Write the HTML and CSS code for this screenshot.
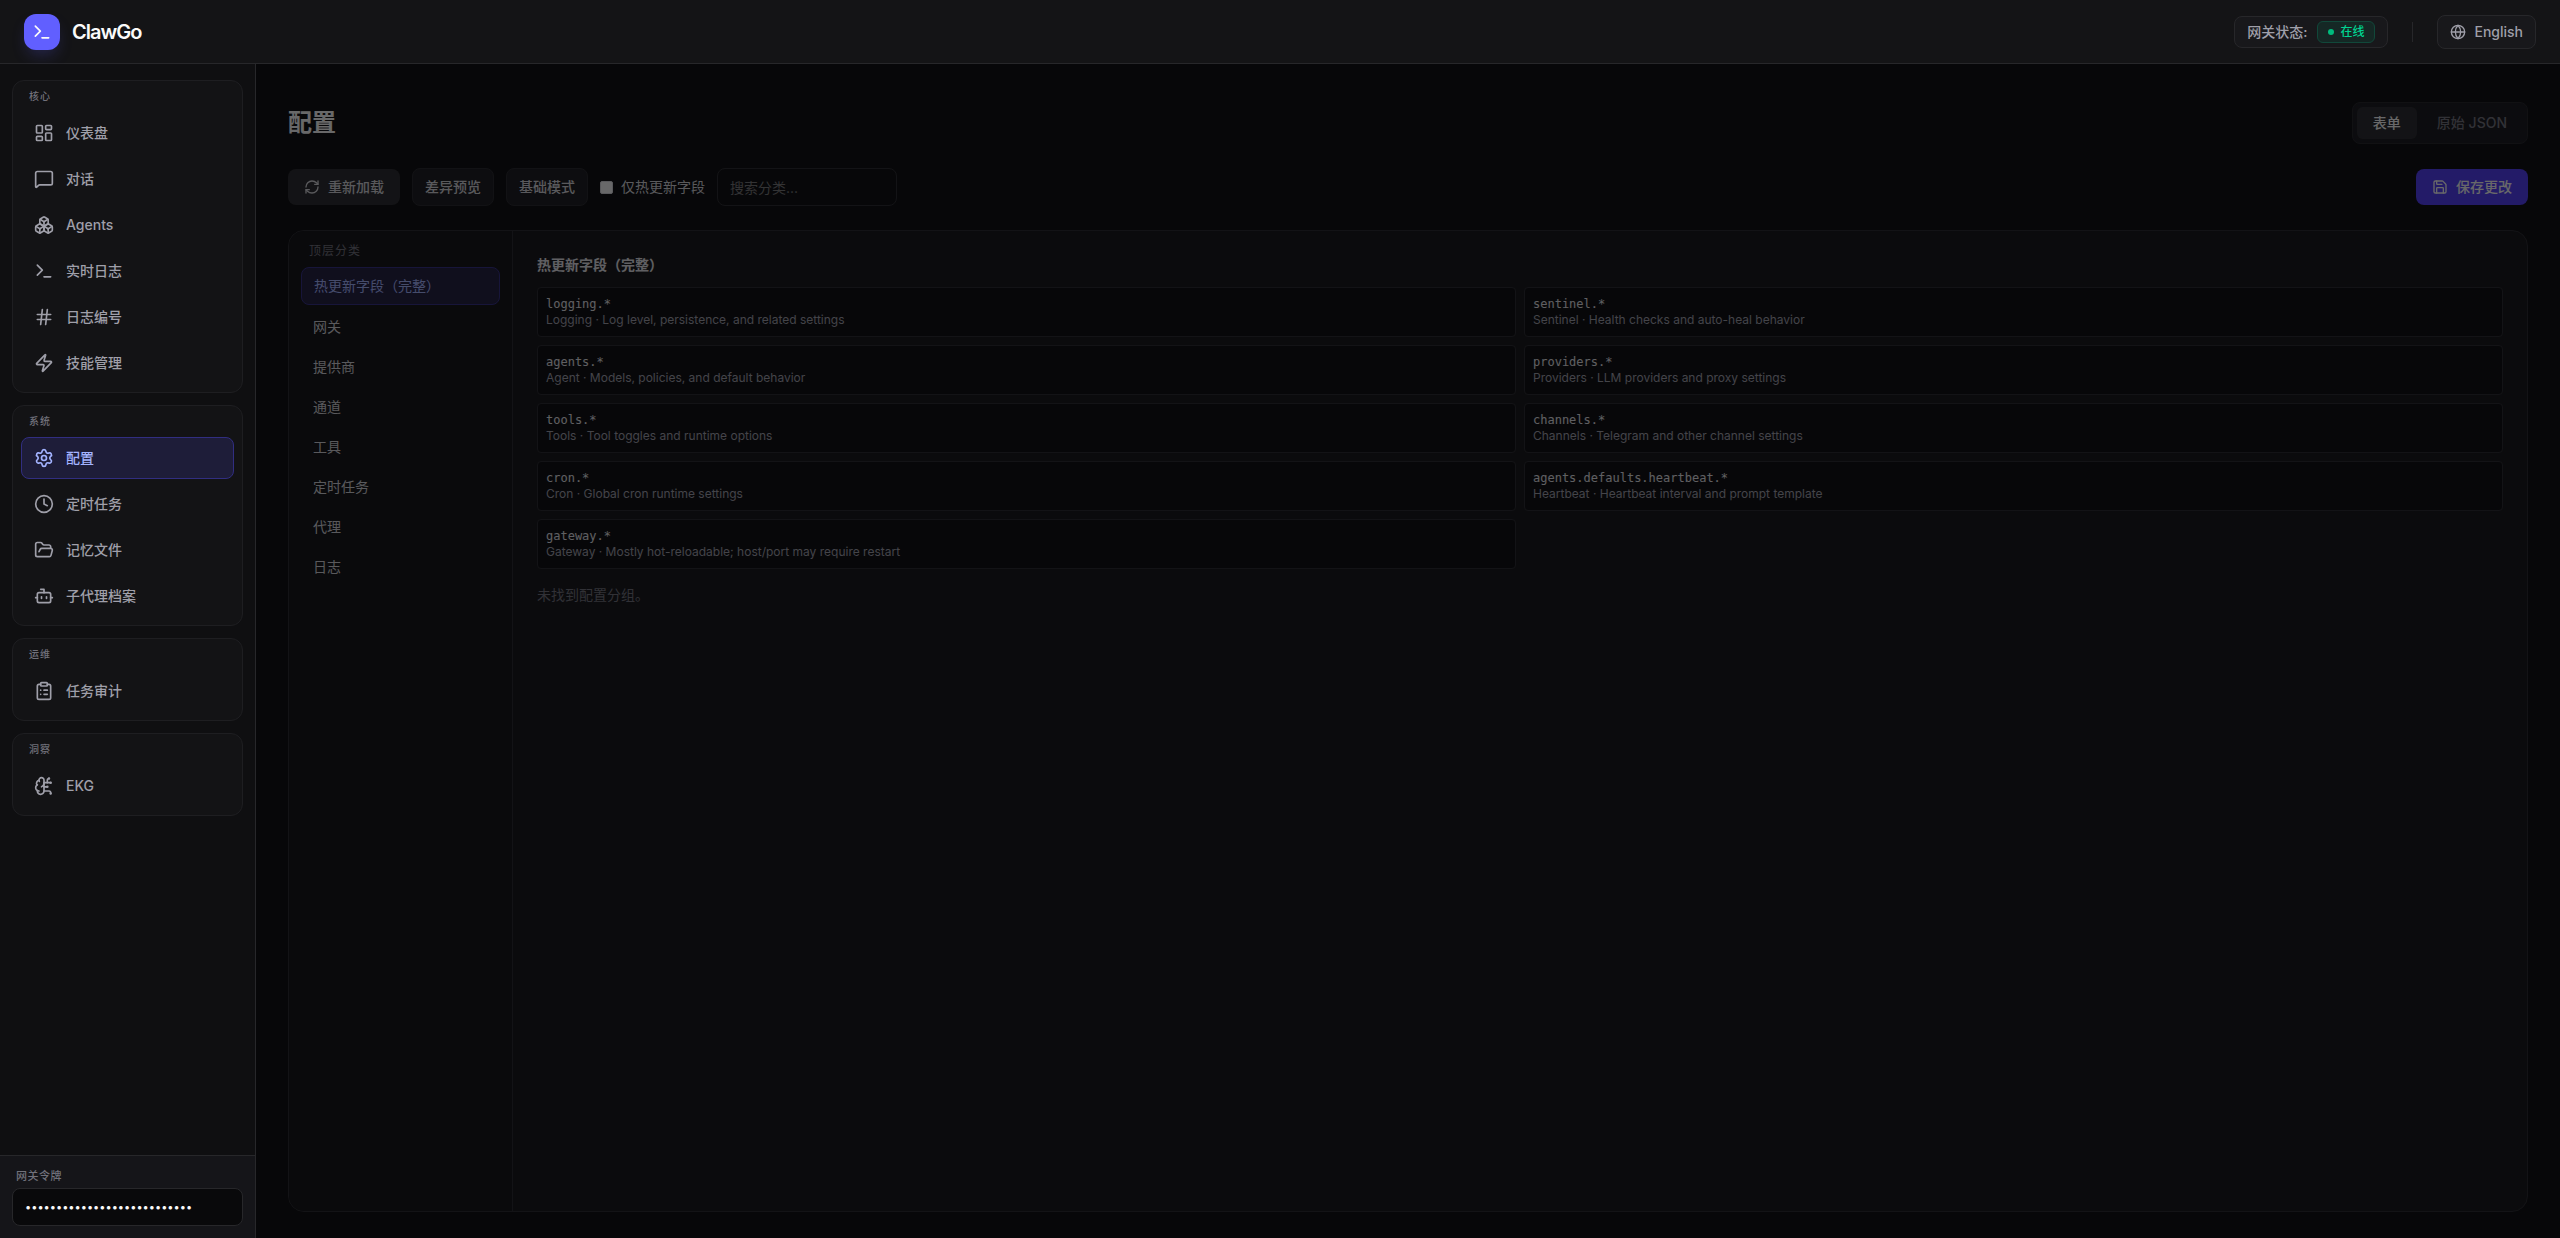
FILE: index.html
```html
<!DOCTYPE html>
<html lang="zh-CN">
<head>
<meta charset="utf-8">
<meta name="viewport" content="width=device-width, initial-scale=1">
<title>ClawGo</title>
<link rel="stylesheet" href="styles.css">
</head>
<body>
<div class="app">
  <header class="topbar">
    <div class="brand">
      <span class="brand-mark"><svg class="icon icon-20" viewBox="0 0 24 24"><path d="M12 19h8"/><path d="m4 17 6-6-6-6"/></svg></span>
      <span class="brand-name">ClawGo</span>
    </div>
    <div class="topbar-actions">
      <div class="status">
        <span>网关状态:</span>
        <span class="badge"><span class="badge-dot"></span>在线</span>
      </div>
      <span class="divider"></span>
      <button class="lang" type="button"><svg class="icon icon-16" viewBox="0 0 24 24"><circle cx="12" cy="12" r="10"/><path d="M12 2a14.5 14.5 0 0 0 0 20 14.5 14.5 0 0 0 0-20"/><path d="M2 12h20"/></svg>English</button>
    </div>
  </header>

  <div class="body">
    <aside class="sidebar">
      <nav class="nav">
        <section class="nav-group">
          <h2 class="nav-title">核心</h2>
          <a class="nav-item" href="#dashboard"><svg class="icon icon-20" viewBox="0 0 24 24"><rect width="7" height="9" x="3" y="3" rx="1"/><rect width="7" height="5" x="14" y="3" rx="1"/><rect width="7" height="9" x="14" y="12" rx="1"/><rect width="7" height="5" x="3" y="16" rx="1"/></svg>仪表盘</a>
          <a class="nav-item" href="#chat"><svg class="icon icon-20" viewBox="0 0 24 24"><path d="M22 17a2 2 0 0 1-2 2H6.828a2 2 0 0 0-1.414.586l-2.202 2.202A.71.71 0 0 1 2 21.286V5a2 2 0 0 1 2-2h16a2 2 0 0 1 2 2z"/></svg>对话</a>
          <a class="nav-item" href="#agents"><svg class="icon icon-20" viewBox="0 0 24 24"><path d="M2.97 12.92A2 2 0 0 0 2 14.63v3.24a2 2 0 0 0 .97 1.71l3 1.8a2 2 0 0 0 2.06 0L12 19v-5.5l-5-3-4.03 2.42Z"/><path d="m7 16.5-4.74-2.85"/><path d="m7 16.5 5-3"/><path d="M7 16.5v5.17"/><path d="M12 13.5V19l3.97 2.38a2 2 0 0 0 2.06 0l3-1.8a2 2 0 0 0 .97-1.71v-3.24a2 2 0 0 0-.97-1.71L17 10.5l-5 3Z"/><path d="m17 16.5-5-3"/><path d="m17 16.5 4.74-2.85"/><path d="M17 16.5v5.17"/><path d="M7.97 4.42A2 2 0 0 0 7 6.13v4.37l5 3 5-3V6.13a2 2 0 0 0-.97-1.71l-3-1.8a2 2 0 0 0-2.06 0l-3 1.8Z"/><path d="M12 8 7.26 5.15"/><path d="m12 8 4.74-2.85"/><path d="M12 13.5V8"/></svg>Agents</a>
          <a class="nav-item" href="#logs"><svg class="icon icon-20" viewBox="0 0 24 24"><path d="M12 19h8"/><path d="m4 17 6-6-6-6"/></svg>实时日志</a>
          <a class="nav-item" href="#log-codes"><svg class="icon icon-20" viewBox="0 0 24 24"><path d="M4 9h16"/><path d="M4 15h16"/><path d="M10 3 8 21"/><path d="m16 3-2 18"/></svg>日志编号</a>
          <a class="nav-item" href="#skills"><svg class="icon icon-20" viewBox="0 0 24 24"><path d="M4 14a1 1 0 0 1-.78-1.63l9.9-10.2a.5.5 0 0 1 .86.46l-1.92 6.02A1 1 0 0 0 13 10h7a1 1 0 0 1 .78 1.63l-9.9 10.2a.5.5 0 0 1-.86-.46l1.92-6.02A1 1 0 0 0 11 14z"/></svg>技能管理</a>
        </section>
        <section class="nav-group">
          <h2 class="nav-title">系统</h2>
          <a class="nav-item is-active" href="#config" aria-current="page"><svg class="icon icon-20" viewBox="0 0 24 24"><path d="M9.671 4.136a2.34 2.34 0 0 1 4.659 0 2.34 2.34 0 0 0 3.319 1.915 2.34 2.34 0 0 1 2.33 4.033 2.34 2.34 0 0 0 0 3.831 2.34 2.34 0 0 1-2.33 4.033 2.34 2.34 0 0 0-3.319 1.915 2.34 2.34 0 0 1-4.659 0 2.34 2.34 0 0 0-3.32-1.915 2.34 2.34 0 0 1-2.33-4.033 2.34 2.34 0 0 0 0-3.831A2.34 2.34 0 0 1 6.35 6.051a2.34 2.34 0 0 0 3.319-1.915"/><circle cx="12" cy="12" r="3"/></svg>配置</a>
          <a class="nav-item" href="#cron"><svg class="icon icon-20" viewBox="0 0 24 24"><circle cx="12" cy="12" r="10"/><path d="M12 6v6l4 2"/></svg>定时任务</a>
          <a class="nav-item" href="#memory"><svg class="icon icon-20" viewBox="0 0 24 24"><path d="m6 14 1.5-2.9A2 2 0 0 1 9.24 10H20a2 2 0 0 1 1.94 2.5l-1.54 6a2 2 0 0 1-1.95 1.5H4a2 2 0 0 1-2-2V5a2 2 0 0 1 2-2h3.9a2 2 0 0 1 1.69.9l.81 1.2a2 2 0 0 0 1.67.9H18a2 2 0 0 1 2 2v2"/></svg>记忆文件</a>
          <a class="nav-item" href="#subagents"><svg class="icon icon-20" viewBox="0 0 24 24"><path d="M12 8V4H8"/><rect width="16" height="12" x="4" y="8" rx="2"/><path d="M2 14h2"/><path d="M20 14h2"/><path d="M15 13v2"/><path d="M9 13v2"/></svg>子代理档案</a>
        </section>
        <section class="nav-group">
          <h2 class="nav-title">运维</h2>
          <a class="nav-item" href="#audit"><svg class="icon icon-20" viewBox="0 0 24 24"><rect width="8" height="4" x="8" y="2" rx="1"/><path d="M16 4h2a2 2 0 0 1 2 2v14a2 2 0 0 1-2 2H6a2 2 0 0 1-2-2V6a2 2 0 0 1 2-2h2"/><path d="M12 11h4"/><path d="M12 16h4"/><path d="M8 11h.01"/><path d="M8 16h.01"/></svg>任务审计</a>
        </section>
        <section class="nav-group">
          <h2 class="nav-title">洞察</h2>
          <a class="nav-item" href="#ekg"><svg class="icon icon-20" viewBox="0 0 24 24"><path d="M12 5a3 3 0 1 0-5.997.125 4 4 0 0 0-2.526 5.77 4 4 0 0 0 .556 6.588A4 4 0 1 0 12 18Z"/><path d="M9 13a4.5 4.5 0 0 0 3-4"/><path d="M6.003 5.125A3 3 0 0 0 6.401 6.5"/><path d="M3.477 10.896a4 4 0 0 1 .585-.396"/><path d="M6 18a4 4 0 0 1-1.967-.516"/><path d="M12 13h4"/><path d="M12 18h6a2 2 0 0 1 2 2v1"/><path d="M12 8h8"/><path d="M16 8V5a2 2 0 0 1 2-2"/><circle cx="16" cy="13" r=".5"/><circle cx="18" cy="3" r=".5"/><circle cx="20" cy="21" r=".5"/><circle cx="20" cy="8" r=".5"/></svg>EKG</a>
        </section>
      </nav>
      <div class="token">
        <label class="token-label" for="token">网关令牌</label>
        <input class="token-input" id="token" type="password" value="abcdefghijklmnopqrstuvwxyz0">
      </div>
    </aside>

    <main class="page">
      <div class="page-head">
        <h1 class="page-title">配置</h1>
        <div class="segmented">
          <button class="segment is-on" type="button">表单</button>
          <button class="segment" type="button">原始 JSON</button>
        </div>
      </div>

      <div class="toolbar">
        <button class="btn btn-reload" type="button"><svg class="icon icon-16" viewBox="0 0 24 24"><path d="M3 12a9 9 0 0 1 9-9 9.75 9.75 0 0 1 6.74 2.74L21 8"/><path d="M21 3v5h-5"/><path d="M21 12a9 9 0 0 1-9 9 9.75 9.75 0 0 1-6.74-2.74L3 16"/><path d="M8 16H3v5"/></svg>重新加载</button>
        <button class="btn btn-outline" type="button">差异预览</button>
        <button class="btn btn-outline" type="button">基础模式</button>
        <label class="check"><input class="check-box" type="checkbox">仅热更新字段</label>
        <input class="search" type="text" placeholder="搜索分类..." aria-label="搜索分类">
        <button class="btn btn-save" type="button"><svg class="icon icon-16" viewBox="0 0 24 24"><path d="M15.2 3a2 2 0 0 1 1.4.6l3.8 3.8a2 2 0 0 1 .6 1.4V19a2 2 0 0 1-2 2H5a2 2 0 0 1-2-2V5a2 2 0 0 1 2-2z"/><path d="M17 21v-7a1 1 0 0 0-1-1H8a1 1 0 0 0-1 1v7"/><path d="M7 3v4a1 1 0 0 0 1 1h7"/></svg>保存更改</button>
      </div>

      <div class="panel">
        <div class="categories">
          <h2 class="categories-title">顶层分类</h2>
          <button class="category is-on" type="button">热更新字段（完整）</button>
          <button class="category" type="button">网关</button>
          <button class="category" type="button">提供商</button>
          <button class="category" type="button">通道</button>
          <button class="category" type="button">工具</button>
          <button class="category" type="button">定时任务</button>
          <button class="category" type="button">代理</button>
          <button class="category" type="button">日志</button>
        </div>
        <div class="fields">
          <h2 class="fields-title">热更新字段（完整）</h2>
          <ul class="field-grid">
            <li class="field"><code class="field-path">logging.*</code><span>Logging · Log level, persistence, and related settings</span></li>
            <li class="field"><code class="field-path">sentinel.*</code><span>Sentinel · Health checks and auto-heal behavior</span></li>
            <li class="field"><code class="field-path">agents.*</code><span>Agent · Models, policies, and default behavior</span></li>
            <li class="field"><code class="field-path">providers.*</code><span>Providers · LLM providers and proxy settings</span></li>
            <li class="field"><code class="field-path">tools.*</code><span>Tools · Tool toggles and runtime options</span></li>
            <li class="field"><code class="field-path">channels.*</code><span>Channels · Telegram and other channel settings</span></li>
            <li class="field"><code class="field-path">cron.*</code><span>Cron · Global cron runtime settings</span></li>
            <li class="field"><code class="field-path">agents.defaults.heartbeat.*</code><span>Heartbeat · Heartbeat interval and prompt template</span></li>
            <li class="field"><code class="field-path">gateway.*</code><span>Gateway · Mostly hot-reloadable; host/port may require restart</span></li>
          </ul>
          <p class="empty">未找到配置分组。</p>
        </div>
      </div>
    </main>
  </div>
</div>
</body>
</html>
```
FILE: styles.css
```css
*, *::before, *::after { box-sizing: border-box; }

body, h1, h2, p, ul { margin: 0; padding: 0; }

body {
  background: #070709;
  color: #fafafa;
  font-family: Inter, "Noto Sans CJK SC", sans-serif;
  font-size: 14px;
  line-height: 20px;
}

button, input { font: inherit; color: inherit; }
button { border: 0; background: none; cursor: pointer; }
a { color: inherit; text-decoration: none; }

.icon {
  flex: none;
  fill: none;
  stroke: currentColor;
  stroke-width: 2;
  stroke-linecap: round;
  stroke-linejoin: round;
}
.icon-16 { width: 16px; height: 16px; }
.icon-20 { width: 20px; height: 20px; }

.app {
  display: flex;
  flex-direction: column;
  min-height: 100vh;
}

/* Top bar */
.topbar {
  display: flex;
  align-items: center;
  justify-content: space-between;
  height: 64px;
  padding: 0 24px;
  background: #141416;
  border-bottom: 1px solid #27272a;
}
.brand {
  display: flex;
  align-items: center;
  gap: 12px;
}
.brand-mark {
  display: grid;
  place-items: center;
  width: 36px;
  height: 36px;
  border-radius: 12px;
  background: #615fff;
  box-shadow: 0 8px 16px -4px rgba(97, 95, 255, .25);
}
.brand-name {
  font-size: 20px;
  font-weight: 600;
  line-height: 28px;
  letter-spacing: -1px;
}
.topbar-actions {
  display: flex;
  align-items: center;
  gap: 24px;
  color: #9f9fa9;
  font-weight: 500;
}
.status {
  display: flex;
  align-items: center;
  gap: 10px;
  padding: 4px 12px;
  border: 1px solid #27272a;
  border-radius: 8px;
  background: #18181b;
}
.badge {
  display: flex;
  align-items: center;
  gap: 6px;
  padding: 2px 10px;
  border: 1px solid #11483a;
  border-radius: 6px;
  background: #152825;
  color: #00d492;
  font-size: 12px;
  line-height: 16px;
}
.badge-dot {
  width: 6px;
  height: 6px;
  border-radius: 50%;
  background: #00bc7d;
}
.divider {
  width: 1px;
  height: 20px;
  background: #27272a;
}
.lang {
  display: flex;
  align-items: center;
  gap: 8px;
  padding: 6px 12px;
  border: 1px solid #27272a;
  border-radius: 8px;
  background: #18181b;
}

/* Sidebar */
.body {
  display: flex;
  flex: 1;
}
.sidebar {
  display: flex;
  flex: none;
  flex-direction: column;
  width: 256px;
  background: #0f0f11;
  border-right: 1px solid #27272a;
}
.nav {
  display: flex;
  flex: 1;
  flex-direction: column;
  gap: 12px;
  padding: 16px 12px;
}
.nav-group {
  display: flex;
  flex-direction: column;
  gap: 4px;
  padding: 8px;
  border: 1px solid #1e1e21;
  border-radius: 12px;
  background: #131315;
}
.nav-title {
  padding: 0 8px 4px;
  color: #71717b;
  font-size: 10px;
  font-weight: 500;
  line-height: 15px;
  letter-spacing: 1px;
}
.nav-item {
  display: flex;
  align-items: center;
  gap: 12px;
  padding: 10px 12px;
  border: 1px solid transparent;
  border-radius: 8px;
  color: #9f9fa9;
  font-weight: 500;
}
.nav-item.is-active {
  border-color: #312e81;
  background: #1e1d39;
  color: #a3b3ff;
}
.token {
  display: flex;
  flex-direction: column;
  gap: 4px;
  padding: 12px;
  border-top: 1px solid #27272a;
  background: #151519;
}
.token-label {
  padding: 0 4px;
  color: #71717b;
  font-size: 11px;
  font-weight: 500;
  line-height: 16px;
  letter-spacing: 0.5px;
}
.token-input {
  width: 100%;
  height: 38px;
  padding: 8px 12px;
  border: 1px solid #27272a;
  border-radius: 8px;
  background: #09090b;
  font-size: 11px;
}

/* Config page */
.page {
  display: flex;
  flex: 1;
  flex-direction: column;
  gap: 24px;
  min-width: 0;
  padding: 38px 32px 26px;
  opacity: .4;
}
.page-head, .toolbar {
  display: flex;
  align-items: center;
}
.page-head { justify-content: space-between; }
.page-title {
  font-size: 24px;
  font-weight: 600;
  line-height: 32px;
}
.segmented {
  display: flex;
  gap: 4px;
  padding: 4px;
  border: 1px solid #202024;
  border-radius: 8px;
  background: #151518;
}
.segment {
  padding: 6px 16px;
  border-radius: 6px;
  color: #71717b;
  font-weight: 500;
}
.segment.is-on {
  background: #27272a;
  color: #fafafa;
}
.toolbar { gap: 12px; }
.btn {
  display: flex;
  align-items: center;
  gap: 8px;
  border-radius: 8px;
  font-weight: 500;
}
.btn-reload {
  padding: 8px 16px;
  background: #27272a;
  color: #d4d4d8;
}
.btn-outline {
  padding: 8px 12px;
  border: 1px solid #242428;
  background: #18181b;
  color: #d4d4d8;
}
.btn-save {
  margin-left: auto;
  padding: 8px 16px;
  background: #4f39f6;
}
.check {
  display: flex;
  align-items: center;
  gap: 8px;
  color: #d4d4d8;
}
.check-box {
  appearance: none;
  width: 13px;
  height: 13px;
  margin: 0;
  border: 1px solid #d4d4d8;
  border-radius: 2px;
  background: #fafafa;
}
.search {
  width: 180px;
  height: 38px;
  padding: 8px 12px;
  border: 1px solid #27272a;
  border-radius: 8px;
  background: #09090b;
}
.search::placeholder { color: #757575; opacity: 1; }

.panel {
  display: flex;
  flex: 1;
  border: 1px solid #27272a;
  border-radius: 16px;
  background: #121215;
  overflow: hidden;
}
.categories {
  display: flex;
  flex: none;
  flex-direction: column;
  gap: 4px;
  width: 224px;
  padding: 12px;
  border-right: 1px solid #27272a;
  background: #0f0f12;
}
.categories-title {
  padding: 0 8px 4px;
  color: #71717b;
  font-size: 12px;
  font-weight: 400;
  line-height: 16px;
  letter-spacing: 1px;
}
.category {
  padding: 8px 12px;
  border-radius: 8px;
  color: #d4d4d8;
  text-align: left;
}
.category.is-on {
  border: 1px solid #312c85;
  background: #1e1b3d;
  color: #a3b3ff;
}
.fields {
  flex: 1;
  min-width: 0;
  padding: 24px;
}
.fields-title {
  margin-bottom: 12px;
  color: #e4e4e7;
  font-size: 14px;
  font-weight: 600;
}
.field-grid {
  display: grid;
  grid-template-columns: repeat(2, minmax(0, 1fr));
  gap: 8px;
  list-style: none;
}
.field {
  display: flex;
  flex-direction: column;
  padding: 8px;
  border: 1px solid #27272a;
  border-radius: 4px;
  background: #09090b;
  color: #9f9fa9;
  font-size: 12px;
  line-height: 16px;
}
.field-path {
  color: #e4e4e7;
  font-family: "DejaVu Sans Mono", monospace;
}
.empty {
  margin-top: 16px;
  color: #71717b;
}
```
